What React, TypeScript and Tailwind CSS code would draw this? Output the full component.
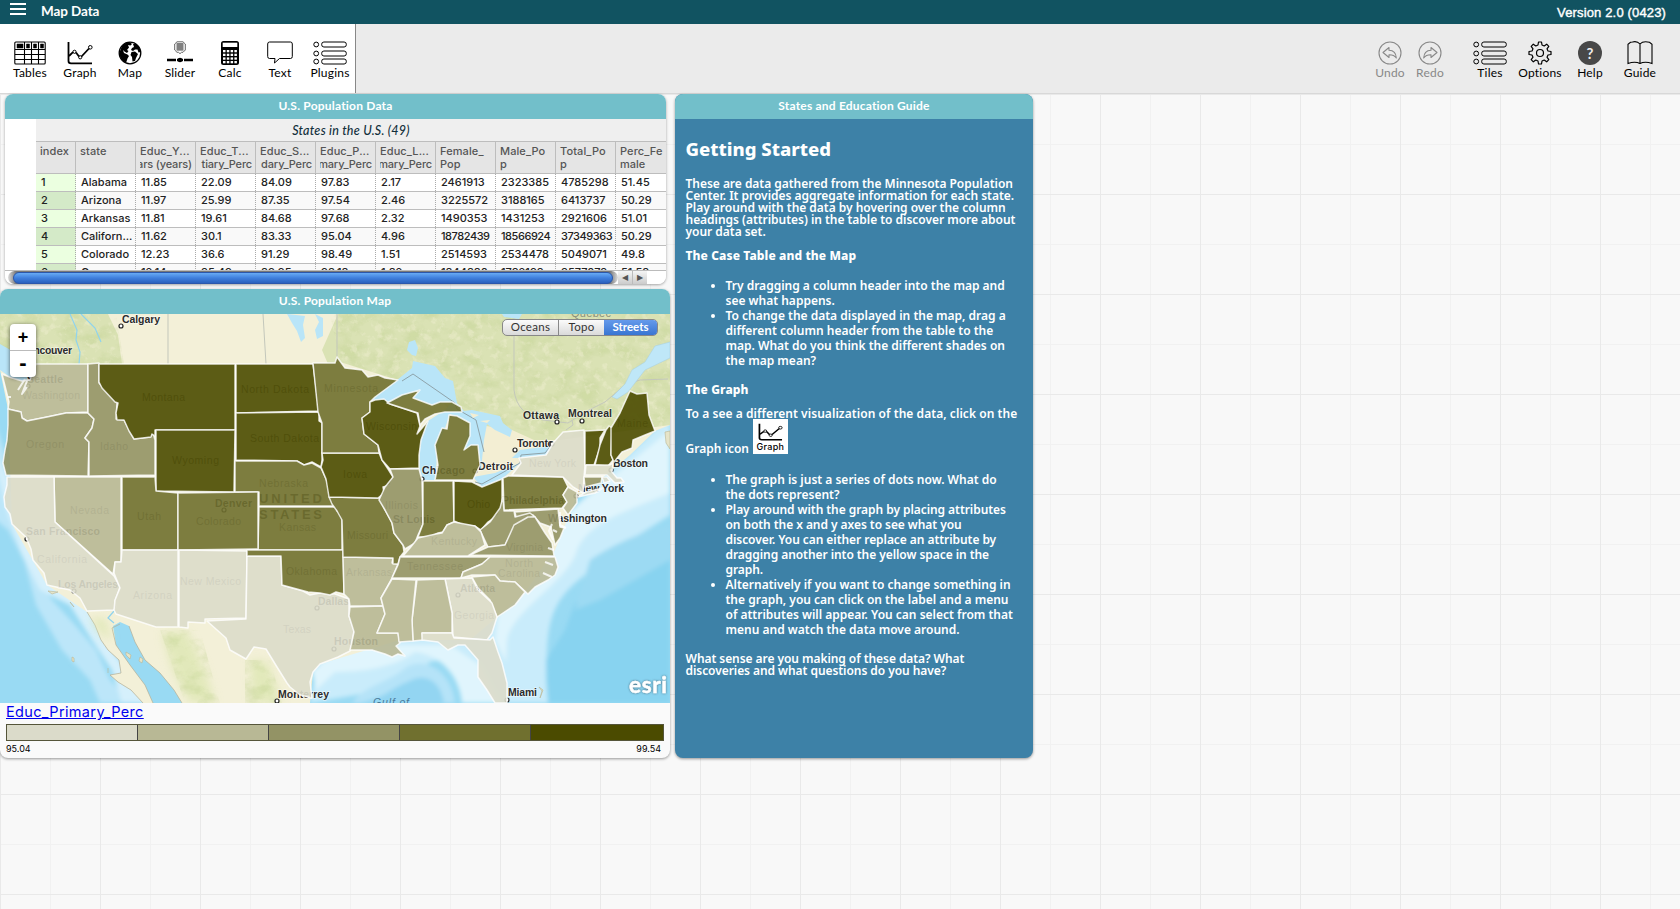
import React from "react";

const SHADES = ["#dbdbca", "#b8b895", "#939365", "#70702f", "#4b4b00"];

const STATES: { c: number; p: string }[] = [
  { c: 1, p: "2,374 12,378 22,381 30,380 36,364 88,364 88,412 66,413 47,417 27,421 22,418 21,412 8,409 9,402 6,390" },
  { c: 2, p: "8,409 21,412 22,418 27,421 47,417 66,413 88,413 94,419 92,428 85,438 89,442 88,476 6,475 3,463 5,450 7,440 8,425" },
  { c: 2, p: "88,364 99,363 99,383 117,403 116,419 124,420 134,439 150,437 153,433 155,440 155,475 89,476 89,442 85,438 92,428 94,419 88,413" },
  { c: 4, p: "99,364 235,364 235,430 155,430 155,436 152,434 151,437 134,439 129,431 124,420 117,420 116,413 118,403 115,402 102,388 99,382" },
  { c: 4, p: "156,430 235,430 234,492 156,491" },
  { c: 4, p: "236,364 313,364 319,411 236,413" },
  { c: 4, p: "236,413 319,412 319,421 322,423 322,460 321,467 312,462 304,465 297,461 236,460" },
  { c: 3, p: "235,461 297,461 304,465 312,463 321,468 326,479 328,484 330,497 336,506 259,506 259,492 235,492" },
  { c: 3, p: "259,507 337,507 337,511 341,514 342,517 342,550 258,550" },
  { c: 1, p: "54,477 121,477 121,562 115,562 113,574 55,522" },
  { c: 0, p: "7,477 54,477 55,522 114,576 120,587 115,601 116,607 114,610 87,611 80,598 70,590 47,585 44,573 33,560 31,549 26,537 12,524 10,514 5,507 4,497 7,485" },
  { c: 3, p: "122,477 155,477 156,491 178,493 178,550 122,550" },
  { c: 3, p: "178,493 258,492 258,549 178,550" },
  { c: 0, p: "122,550 178,550 178,627 156,627 116,614 114,610 115,600 120,588 114,573 115,562 121,562" },
  { c: 0, p: "179,550 247,551 246,618 205,619 205,623 188,622 188,628 179,627" },
  { c: 0, p: "247,556 281,556 282,585 303,591 310,595 320,593 335,594 349,599 349,616 354,630 352,645 350,651 338,657 320,664 313,672 310,682 312,698 300,695 290,687 287,683 277,667 266,649 254,647 246,659 230,650 226,638 207,621 246,619" },
  { c: 3, p: "247,550 343,550 344,594 336,592 330,595 320,593 308,592 282,585 281,556 247,556" },
  { c: 1, p: "343,557 393,558 392,563 398,564 392,578 381,598 383,606 350,606 349,599 344,594" },
  { c: 1, p: "350,607 383,606 385,614 377,633 398,633 400,643 396,646 405,656 398,654 392,657 385,654 372,650 350,650 354,632 349,616" },
  { c: 3, p: "329,497 379,498 385,510 392,523 394,533 403,545 404,552 400,557 398,564 393,564 393,558 343,557 342,520 337,511 332,504" },
  { c: 4, p: "322,453 379,453 382,460 388,469 393,477 390,485 383,487 384,493 378,498 329,497 326,479 321,467 323,460" },
  { c: 3, p: "313,363 335,363 337,357 345,368 362,370 368,377 378,375 385,378 398,380 375,397 370,402 370,412 362,418 364,434 378,445 379,453 322,453 322,423 318,412" },
  { c: 4, p: "370,402 375,400 384,399 390,404 417,413 420,426 417,434 428,421 421,440 419,455 419,468 390,469 382,460 378,445 364,434 362,418 370,412" },
  { c: 3, p: "387,403 402,395 420,390 413,398 432,405 440,402 452,402 461,407 462,412 445,412 435,414 425,419 420,425 418,413" },
  { c: 3, p: "449,415 457,416 470,423 470,436 464,450 471,445 478,445 480,465 473,480 435,480 438,465 435,445 442,428 447,429" },
  { c: 2, p: "390,469 419,469 422,480 423,524 418,535 415,543 405,549 403,545 394,533 392,523 385,510 379,500 385,487 393,477" },
  { c: 3, p: "423,481 453,481 454,522 447,525 443,532 438,533 430,537 418,537 423,524" },
  { c: 4, p: "454,481 472,482 482,487 502,479 502,505 498,515 488,522 481,530 475,526 463,525 454,521" },
  { c: 3, p: "503,478 508,476 563,477 568,487 563,495 567,502 562,508 504,510" },
  { c: 0, p: "512,475 521,463 519,458 546,455 553,443 563,432 584,430 585,465 584,477 583,493 573,487 563,477" },
  { c: 4, p: "585,431 605,430 600,438 600,448 594,465 585,465" },
  { c: 4, p: "606,430 609,426 612,428 611,455 613,460 608,466 595,465 600,445" },
  { c: 4, p: "630,391 637,394 647,393 649,415 655,431 645,435 633,440 632,448 622,452 614,462 611,455 611,428 620,413" },
  { c: 0, p: "586,465 610,465 613,463 612,472 617,478 621,478 624,482 615,483 607,475 585,475" },
  { c: 2, p: "584,477 602,477 601,483 585,487" },
  { c: 0, p: "602,477 607,477 610,481 604,483" },
  { c: 0, p: "578,497 586,492 603,488 595,493" },
  { c: 1, p: "568,487 577,492 577,503 568,515 563,508 567,502 563,495" },
  { c: 2, p: "515,512 558,509 560,527 564,528 560,538 555,545 551,527 540,523 533,515 523,517 516,517" },
  { c: 2, p: "503,497 504,511 514,511 515,517 530,513 535,517 527,518 514,528 505,545 488,547 480,530 490,522 500,508" },
  { c: 2, p: "470,555 488,547 505,545 514,525 528,517 535,517 545,533 552,543 554,556" },
  { c: 1, p: "403,556 410,548 418,538 436,534 442,533 447,525 454,522 475,526 481,532 485,545 468,556" },
  { c: 2, p: "400,557 490,557 482,564 463,572 461,578 392,578 398,565" },
  { c: 1, p: "490,557 555,557 558,567 555,575 548,580 535,587 528,594 515,582 500,581 495,575 472,575 461,578 463,572 482,564" },
  { c: 1, p: "472,577 495,575 500,581 515,582 525,592 515,605 497,617 490,600 478,588" },
  { c: 0, p: "445,579 472,578 478,590 492,603 497,617 492,633 487,640 453,637 452,613" },
  { c: 1, p: "417,580 445,579 452,613 452,633 422,633 423,640 413,641 412,620" },
  { c: 1, p: "392,579 416,580 412,620 413,641 399,642 398,633 377,633 385,614 383,606 381,598" },
  { c: 0, p: "422,633 452,633 454,638 490,640 493,637 498,652 502,663 507,683 507,703 495,703 487,690 478,677 478,660 465,645 458,645 448,650 438,642 422,640" },
];

const CITIES: [string, number, number, number][] = [
  ["Calgary", 122, 323, 38], ["Vancouver", 22, 354, 50], ["Seattle", 27, 383, 36],
  ["Denver", 215, 507, 37], ["San Francisco", 26, 535, 74], ["Los Angeles", 58, 588, 60],
  ["Dallas", 318, 605, 31], ["Houston", 334, 645, 44], ["Monterrey", 278, 698, 51],
  ["Miami", 508, 696, 29], ["Atlanta", 460, 592, 35], ["St Louis", 393, 523, 42],
  ["Chicago", 422, 474, 43], ["Detroit", 478, 470, 35], ["Toronto", 517, 447, 37],
  ["Ottawa", 523, 419, 36], ["Montreal", 568, 417, 44], ["Boston", 613, 467, 35],
  ["New York", 578, 492, 46], ["Washington", 548, 522, 59], ["Philadelphia", 502, 504, 62],
];

const REGIONS: [string, number, number, number][] = [
  ["Washington", 22, 399, 58], ["Oregon", 26, 448, 38], ["Idaho", 100, 450, 28],
  ["Montana", 142, 401, 43], ["North Dakota", 241, 393, 68], ["South Dakota", 250, 442, 69],
  ["Minnesota", 324, 392, 54], ["Wisconsin", 366, 430, 51], ["Iowa", 343, 478, 24],
  ["Wyoming", 172, 464, 47], ["Nebraska", 259, 487, 49], ["Nevada", 70, 514, 39],
  ["Utah", 137, 520, 24], ["Colorado", 196, 525, 45], ["Kansas", 279, 531, 37],
  ["California", 37, 563, 50], ["Arizona", 133, 599, 39], ["New Mexico", 180, 585, 61],
  ["Oklahoma", 286, 575, 51], ["Texas", 283, 633, 28], ["Arkansas", 346, 576, 46],
  ["Missouri", 347, 539, 41], ["Illinois", 385, 509, 33], ["Ohio", 467, 508, 23],
  ["Kentucky", 431, 545, 46], ["Tennessee", 407, 570, 56], ["Virginia", 506, 551, 37],
  ["North", 505, 567, 28], ["Carolina", 498, 577, 42], ["Georgia", 454, 619, 40],
  ["New York", 529, 467, 47], ["Maine", 617, 427, 31],
];

const DOTS = [[121, 326], [515, 450], [557, 422], [582, 421], [507, 700], [277, 701], [27, 539], [74, 591], [224, 510], [317, 608], [458, 595], [422, 479], [475, 471], [552, 444], [611, 470], [576, 496], [334, 649], [28, 386]];

function UsMap() {
  return (
    <svg className="block h-[389px] w-[670px]" viewBox="0 314 670 389" fontFamily="Liberation Sans, sans-serif">
      <defs>
        <filter id="relief" filterUnits="userSpaceOnUse" x="0" y="314" width="670" height="389" colorInterpolationFilters="sRGB">
          <feTurbulence type="fractalNoise" baseFrequency="0.05 0.07" numOctaves="5" seed="7" />
          <feColorMatrix values="0 0 0 0 0.72  0 0 0 0 0.8  0 0 0 0 0.52  3 0 0 0 -1.3" />
          <feComposite in2="SourceGraphic" operator="in" />
        </filter>
        <filter id="clearings" filterUnits="userSpaceOnUse" x="0" y="314" width="670" height="389" colorInterpolationFilters="sRGB">
          <feTurbulence type="fractalNoise" baseFrequency="0.12" numOctaves="4" seed="21" />
          <feColorMatrix values="0 0 0 0 0.955  0 0 0 0 0.945  0 0 0 0 0.84  5 0 0 0 -2.7" />
          <feComposite in2="SourceGraphic" operator="in" />
        </filter>
        <filter id="soft"><feGaussianBlur stdDeviation="5" /></filter>
        <filter id="shore" x="-10%" y="-10%" width="120%" height="120%"><feGaussianBlur stdDeviation="2" /></filter>
        <filter id="logo"><feDropShadow dx="0" dy="0" stdDeviation="1.3" floodColor="#345" floodOpacity="0.8" /></filter>
      </defs>
      <rect y="314" width="670" height="389" fill="#99daf3" />
      <g filter="url(#shore)">
        <path d="M-10 405 L10 470 12 510 27 560 52 600 75 625 96 650 110 680 132 703 100 703 90 680 62 650 36 605 24 560 8 530 -10 515Z" fill="#bce6f9" />
        <path d="M-10 440 L8 515 22 555 40 590 70 605 92 640 112 670 122 703 150 703 105 640 80 590 40 560 8 480Z" fill="#d5f0fc" />
        <path d="M670 415 V515 C640 535 610 550 585 575 C545 605 548 630 546 680 L548 703 H490 C470 680 455 655 430 662 C405 682 398 675 385 690 L310 703 320 655 380 630 440 600 560 520Z" fill="#c9ecfb" />
        <path d="M670 430 V493 C630 510 588 522 577 550 C570 580 512 610 507 640 L506 662 495 640 500 600 560 520Z M450 645 L480 665 500 703 H462 C460 680 445 656 415 652 C395 668 360 672 335 672 L316 690 312 670 350 645Z" fill="#e0f5fd" />
        <path d="M352 703 C365 685 390 682 405 668 C425 655 452 672 455 703Z" fill="#b5e3f8" />
        <path d="M360 703 C385 698 395 686 408 682 C425 672 440 680 444 703Z" fill="#93d5f2" />
        <path d="M575 603 C600 590 640 570 670 555 V703 H548 L546 660 565 630Z" fill="#88d3f0" />
        <path d="M590 560 C620 540 650 530 670 525 V560 L600 600 575 610Z" fill="#9cdaf3" />
      </g>
      <path d="M0 314 H670 V425 L655 431 630 455 612 470 575 500 555 550 525 592 497 617 470 640 400 640 350 655 320 664 313 672 310 703 H182 L174 690 160 673 145 660 135 642 129 626 120 622 113 626 116 645 130 665 145 685 153 703 H143 L131 690 118 682 110 675 121 673 119 660 108 650 101 640 95 625 87 612 47 585 12 524 8 409 0 370Z" fill="#f3f0d8" />
      <path d="M143 703 L131 690 118 682 110 675 121 673 119 660 108 650 101 640 95 625 87 612 M153 703 L145 685 130 665 116 645 112 628 120 624 M182 703 L174 690 160 673 145 660 135 642 129 626" fill="none" stroke="#b3ad93" strokeWidth="0.7" />
      <path d="M0 314 H108 L118 335 122 364 H0Z M338 314 H670 V425 L560 440 480 440 430 390 340 362 328 364 322 350Z" fill="#dae2b4" />
      <path d="M480 425 L512 430 545 445 520 462 480 483 481 440Z" fill="#f3eed3" />
      <path d="M162 632 L188 632 205 670 215 703 190 703 172 668Z M250 660 L268 662 282 703 252 703Z M90 618 L105 618 112 640 101 634Z" fill="#dce6b0" opacity=".75" filter="url(#soft)" />
      <path d="M0 314 H116 L124 364 H0Z M330 314 H670 V425 L560 438 500 425 430 390 340 362Z M160 630 L200 630 220 703 185 703Z M245 660 L270 660 282 703 245 703Z" fill="#fff" opacity=".3" filter="url(#relief)" />
      <path d="M0 314 H112 L120 364 H0Z M330 314 H670 V425 L560 438 500 425 430 390 340 362Z" fill="#fff" opacity=".4" filter="url(#clearings)" />
      <path d="M168 314 V364 M263 314 L266 364 M337 314 V360 M514 314 V390 Q517 415 543 420 L568 423 585 412 605 402 625 385 640 380 668 379 M566 430 L573 425 572 420" fill="none" stroke="#c3c7bb" strokeWidth="1" />
      <path d="M670 342 V358 L645 370 628 392 617 399 612 397 625 384 632 370 645 362 655 346Z" fill="#bfe7f8" stroke="#a7cfe0" strokeWidth=".5" />
      <g fill="#b9e5f8">
        <path d="M287 314 L305 316 303 325 305 338 301 342 297 331 292 323Z M315 314 L323 318 323 336 317 339 315 330 319 322Z M502 314 H522 L519 319 504 317Z M0 344 L14 352 24 364 36 376 22 381 10 377 0 370Z" />
        <path d="M409 342 L415 340 418 348 416 356 412 355 407 350Z M370 400 L397 380 412 368 413 361 435 366 445 378 453 381 457 403 464 411 472 410 500 416 503 423 512 430 510 437 495 430 487 424 484 440 481 470 478 445 464 450 470 423 450 414 445 428 438 445 435 480 423 480 419 468 420 440 428 421 445 410 452 402 432 405 413 398 420 390 390 404Z" />
        <path d="M473 477 L495 473 520 463 502 479 482 487Z M512 458 L520 450 550 446 552 449 545 455 520 458Z" />
      </g>
      <path d="M402 381 L413 374 455 403 457 409 476 420 484 452 M475 482 L482 484 520 463 521 455 545 453 553 443" fill="none" stroke="#8ea3aa" strokeWidth="1" />
      <path d="M470 413 L479 415 473 418Z M480 421 L490 420 487 423Z" fill="#f3eed3" />
      <path d="M70 314 L77 330 76 340 80 352 79 364 M81 314 L95 328 101 342 M114 611 L108 618 114 623" fill="none" stroke="#8fd3ee" strokeWidth="1.2" />
      <path d="M126 652 l5 3 -1 4 -4 -4Z M140 657 l3 2 -1 4 -3 -2Z M48 591 l10 1 -6 2Z M70 602 l4 5Z M108 668 v5 M539 687 l4 3 -3 8 2 -7Z M665 432 l5 -1 v18 l-4 -6Z M72 657 l2 1 v4 l-2 -1Z" fill="#e6e4c8" stroke="#b9b594" strokeWidth=".6" />
      <g fontSize="10.5" fill="#77776c">
        {REGIONS.map(([t, x, y, w]) => (
          <text key={t + y} x={x} y={y} textLength={w}>{t}</text>
        ))}
      </g>
      <g fontSize="13" fontWeight="bold" fill="#36362e">
        <text x="259" y="503" textLength="63">UNITED</text>
        <text x="259" y="519" textLength="63">STATES</text>
      </g>
      <g fontSize="10.5" fontWeight="bold" fill="#2c2c2c" stroke="#fff" strokeWidth="1.6" strokeOpacity=".5" paintOrder="stroke">
        {CITIES.map(([t, x, y, w]) => (
          <text key={t} x={x} y={y} textLength={w}>{t}</text>
        ))}
      </g>
      <text x="571" y="317" fontSize="11" fill="#8b8f7a" textLength="40">Québec</text>
      <text x="373" y="706" fontSize="10.5" fontStyle="italic" fill="#47799a" textLength="36">Gulf of</text>
      <g fill="#fff" stroke="#222" strokeWidth="1.2">
        {DOTS.map(([x, y]) => <circle key={`${x}-${y}`} cx={x} cy={y} r="2" />)}
      </g>
      <g stroke="#fff" strokeOpacity=".8" strokeWidth="1.5" strokeLinejoin="round">
        {STATES.map((s) => (
          <polygon key={s.p} points={s.p} fill={SHADES[s.c]} fillOpacity=".9" />
        ))}
        <path d="M25 379 L18 390 M27 381 L22 394 27 387 M8 397 L11 397 M552 524 L549 531 553 540 M560 512 L560 525 566 528 M553 530 L557 532 M548 548 l6 2 M545 562 l8 3 M543 573 l9 4" fill="none" strokeWidth="2" />
      </g>
      <text x="629" y="693" fontFamily="Lato, sans-serif" fontWeight="bold" fontSize="22.500" fill="#fff" stroke="#fff" strokeWidth=".4" textLength="38" filter="url(#logo)">esri</text>
    </svg>
  );
}

const I = "h-6 fill-none stroke-black";

const TablesIcon = () => (
  <svg className={`${I} w-8`} viewBox="0 0 32 24">
    <rect x=".8" y="1" width="30.4" height="22" rx="1" strokeWidth="1.1" />
    <path d="M1 8.5H31M1 13.5H31M1 18.5H31M10.5 1V23M17.5 1V23M24.5 1V23" strokeWidth="1.1" />
    <path d="M3 3H9V7H3ZM12.5 3H15.5V7H12.5ZM19.5 3H22.5V7H19.5ZM26.5 3H29.5V7H26.5Z" fill="#000" strokeWidth=".5" />
  </svg>
);
const GraphIcon = ({ className = "h-6 w-[26px]" }: { className?: string }) => (
  <svg className={`${className} fill-none stroke-black`} viewBox="0 0 26 24" preserveAspectRatio="none">
    <path d="M1.5 1V20Q1.5 22.3 4 22.3H25" strokeWidth="1.8" />
    <path d="M2 15L6 11.2M9 11.5L12 15.5M14.5 15.5L22 7.5" strokeWidth="1.8" />
    <circle cx="7.5" cy="10.8" r="1.6" /><circle cx="13.2" cy="16.3" r="1.6" /><circle cx="23.3" cy="6.3" r="1.8" />
  </svg>
);
const GlobeIcon = () => (
  <svg className={`${I} w-6`} viewBox="0 0 24 24">
    <circle cx="12" cy="12" r="10.8" strokeWidth="1.3" />
    <path fill="#000" stroke="none" d="M4 5Q7 1.5 12 1.3L14 3 12.5 4.5 10 4 11 6.5 9 9 10.5 10 9 12 6.5 10.5 5 9 6 12 9.5 13.5 11 15 9.5 17.5 8 22Q3 19.500 1.500 14L2 10ZM15 3L18 2.800Q22 6 22.700 11L20.500 11.500 19.500 8.500 17 8.500 15 10 13 9 14 7 16 6ZM13.500 11L17 10.500 20 13 18 17 17 20 14.500 20.500 14 16 12.500 14Z" />
  </svg>
);
const SliderIcon = () => (
  <svg className={`${I} w-[26px]`} viewBox="0 0 26 24">
    <path d="M10 .8H16L18.300 3V9L16 11.300H14.500L13 12.700 11.500 11.300H10L7.700 9V3Z" strokeWidth=".9" stroke="#555" />
    <path d="M9.500 2H16.500V9.700H9.500Z" fill="#808080" stroke="none" />
    <path d="M0 19H9M17 19H26M10 19H16" strokeWidth="2.500" /><circle cx="13" cy="19" r="2.300" fill="#000" stroke="none" />
  </svg>
);
const CalcIcon = () => (
  <svg className={`${I} w-[18px]`} viewBox="0 0 18 24">
    <rect width="18" height="24" rx="2.500" fill="#000" stroke="none" />
    <rect x="1.700" y="1.700" width="14.600" height="4.300" fill="#fff" stroke="none" />
    {[9, 12.7, 16.4, 20].map((y) => [2, 5.8, 9.6, 13.4].map((x) => (
      <rect key={`${x}-${y}`} x={x} y={y} width="2.500" height="2.300" fill="#fff" stroke="none" />
    )))}
  </svg>
);
const TextIcon = () => (
  <svg className={`${I} w-[26px]`} viewBox="0 0 26 24">
    <path d="M2.500 1H23.500Q25.300 1 25.300 3V15.500Q25.300 17.500 23.500 17.500H12.500L7.500 22 8 17.500H2.500Q.7 17.500 .7 15.500V3Q.7 1 2.500 1Z" strokeWidth="1" />
  </svg>
);
const ListIcon = () => (
  <svg className={`${I} w-[34px]`} viewBox="0 0 34 24">
    {[3.5, 12.5, 20.5].map((y) => (
      <g key={y} strokeWidth="1">
        <circle cx="3.200" cy={y} r="2.400" /><rect x="8.700" y={y - 2.5} width="24.600" height="5" rx="2.200" />
      </g>
    ))}
  </svg>
);
const ArrowIcon = ({ flip = false }: { flip?: boolean }) => (
  <svg className="h-6 w-6 fill-none stroke-[#888]" viewBox="0 0 24 24">
    <circle cx="12" cy="12" r="11" strokeWidth="1.100" />
    <path transform={flip ? "translate(24 0) scale(-1 1)" : undefined} d="M5 11.500L11 6.500V9.300Q18 9.500 18.300 17Q16 13.700 11 13.800V16.500Z" strokeWidth="1.100" strokeLinejoin="round" />
  </svg>
);
const GearIcon = () => (
  <svg className={`${I} w-6`} viewBox="0 0 24 24">
    <path d="M10.500 1H13.500L14 4 16.200 5 18.700 3.200 20.800 5.300 19 7.800 20 10 23 10.500V13.500L20 14 19 16.200 20.800 18.700 18.700 20.800 16.200 19 14 20 13.500 23H10.500L10 20 7.800 19 5.300 20.800 3.200 18.700 5 16.200 4 14 1 13.500V10.500L4 10 5 7.800 3.200 5.300 5.300 3.200 7.800 5 10 4Z" strokeWidth="1.200" strokeLinejoin="round" />
    <circle cx="12" cy="12" r="3.500" strokeWidth="1.200" />
  </svg>
);
const HelpIcon = () => (
  <span className="flex h-6 w-6 items-center justify-center rounded-full bg-[#484848] text-[15px] font-bold leading-none text-[#eee]">?</span>
);
const BookIcon = () => (
  <svg className={`${I} w-[26px]`} viewBox="0 0 26 24">
    <path d="M13 3Q10 -.3 5.500 1 L3.500 1.300 1 3.200V22.500Q8 20 13 22.500Q18 20 25 22.500V3.200L22.500 1.300Q16 -.3 13 3ZM13 3V22.500" strokeWidth="1.100" />
  </svg>
);

function Tool({ label, icon, className = "w-[50px]" }: { label: string; icon: React.ReactNode; className?: string }) {
  return (
    <div className={`${className} flex shrink-0 flex-col items-center pt-[17px] text-[12px] font-normal leading-[15px]`}>
      {icon}
      <span className="tracking-[0.2px]">{label}</span>
    </div>
  );
}

function TitleBar({ children }: { children: string }) {
  return <div className="h-[25px] shrink-0 bg-[#72bfca] text-center font-[Lato] text-[12px] font-bold leading-[23px] tracking-[0.2px] text-white">{children}</div>;
}

const HEAD: [string, string, boolean][] = [
  ["index", "", false], ["state", "", false],
  ["Educ_Y...", "ars (years)", true], ["Educ_T...", "tiary_Perc", true], ["Educ_S...", "dary_Perc", true],
  ["Educ_P...", "mary_Perc", true], ["Educ_L...", "mary_Perc", true],
  ["Female_", "Pop", false], ["Male_Po", "p", false], ["Total_Po", "p", false], ["Perc_Fe", "male", false],
];
const ROWS = [
  ["1", "Alabama", "11.85", "22.09", "84.09", "97.83", "2.17", "2461913", "2323385", "4785298", "51.45"],
  ["2", "Arizona", "11.97", "25.99", "87.35", "97.54", "2.46", "3225572", "3188165", "6413737", "50.29"],
  ["3", "Arkansas", "11.81", "19.61", "84.68", "97.68", "2.32", "1490353", "1431253", "2921606", "51.01"],
  ["4", "Californ...", "11.62", "30.1", "83.33", "95.04", "4.96", "18782439", "18566924", "37349363", "50.29"],
  ["5", "Colorado", "12.23", "36.6", "91.29", "98.49", "1.51", "2514593", "2534478", "5049071", "49.8"],
  ["6", "Connec...", "12.14", "35.49", "89.95", "98.18", "1.82", "1844880", "1732193", "3577073", "51.58"],
];
const COLS = "grid grid-cols-[40px_60px_60px_60px_60px_60px_60px_60px_60px_60px_50px]";

function TableTile() {
  return (
    <section className="ml-[5px] flex h-[190px] w-[661px] flex-col overflow-hidden rounded-lg bg-white shadow-[0_1px_3px_rgba(0,0,0,0.35)]">
      <TitleBar>U.S. Population Data</TitleBar>
      <div className="ml-[31px] h-[151px] overflow-hidden font-[Inter]">
        <div className="h-[22px] bg-[#efefef] text-center font-[Lato] text-[12.5px] font-medium italic leading-[23px] tracking-[0.25px] text-[#12303c]">States in the U.S. (49)</div>
        <div className={`${COLS} h-[33px] border-y border-[#bdbdbd] bg-[#e5e5e5] text-[11px] font-medium leading-[12.5px] text-[#555]`}>
          {HEAD.map(([a, b, cut], i) => (
            <div key={i} className={`overflow-hidden whitespace-nowrap border-[#bdbdbd] pl-1 pr-[3px] pt-[3px] ${i < 10 ? "border-r" : ""}`}>
              <div className="tracking-[0.1px]">{a}</div>
              <div className={cut ? "flex justify-end overflow-hidden tracking-[-0.15px]" : ""}>{b}</div>
            </div>
          ))}
        </div>
        {ROWS.map((r, n) => (
          <div key={n} className={`${COLS} h-[18px] border-b border-[#bdbdbd] text-[11px] font-medium leading-[17px] text-[#222] ${n % 2 ? "bg-[#f9f9f9]" : "bg-white"}`}>
            {r.map((v, i) => (
              <div key={i} className={`whitespace-nowrap border-dotted border-[#aaa] pl-[5px] ${i < 10 ? "border-r" : ""} ${v.length === 8 && i > 6 ? "tracking-[-0.45px]" : ""} ${i ? "" : n % 2 ? "bg-[#d4eac8]" : "bg-[#ebffe0]"}`}>{v}</div>
            ))}
          </div>
        ))}
      </div>
      <div className="flex h-[14px] items-center border-t border-[#bbb] bg-white pl-[3px]">
        <div className="flex h-[13px] w-[610px] items-center rounded-full bg-[linear-gradient(to_right,#ddd,#777_8px,#777_602px,#ddd)] px-[5px]">
          <div className="h-3 w-full rounded-full border border-[#2b57ab] bg-linear-to-b from-[#68abf5] via-[#3f7fdd] to-[#2a61bd]" />
        </div>
        <div className="flex h-[13px] w-[29px] bg-linear-to-b from-[#f5f5f5] to-[#ccc] text-[8px] leading-[13px] text-[#555]">
          <span className="w-[15px] border-r border-[#bbb] text-center">◀</span>
          <span className="w-[14px] text-center">▶</span>
        </div>
      </div>
    </section>
  );
}

function MapTile() {
  return (
    <section className="flex h-[469px] w-[670px] flex-col overflow-hidden rounded-lg bg-[#fafafa] shadow-[0_1px_3px_rgba(0,0,0,0.4)]">
      <TitleBar>U.S. Population Map</TitleBar>
      <div className="relative h-[389px] shrink-0">
        <UsMap />
        <div className="absolute left-[10px] top-[10px] flex h-[53px] w-[26px] flex-col rounded bg-white text-center font-['Liberation_Sans'] text-[18px] font-bold leading-[27px] shadow-[0_1px_4px_rgba(0,0,0,0.6)]">
          <span className="h-[27px] border-b border-[#bbb]">+</span>
          <span className="text-[22px] leading-[23px]">-</span>
        </div>
        <div className="absolute left-[502px] top-[5px] flex h-[17px] overflow-hidden rounded-[5px] border border-[#888] bg-linear-to-b from-[#fbfbfb] to-[#dadada] text-center font-[Lato] text-[11.5px] leading-[14px] tracking-[0.3px] text-[#333]">
          <span className="w-[56px] border-r border-[#888]">Oceans</span>
          <span className="w-[45px]">Topo</span>
          <span className="w-[53px] bg-linear-to-b from-[#659aeb] to-[#3875d2] font-bold tracking-normal text-white">Streets</span>
        </div>
      </div>
      <div className="px-[6px] font-[Inter]">
        <div className="h-[21px] text-[14.5px] leading-[17px] tracking-[0.35px] text-[#0000ee]"><span className="underline">Educ_Primary_Perc</span></div>
        <div className="flex h-[17px] w-[658px] border border-[#55553a]">
          <div className="w-[131px] border-r border-[#444] bg-[#dbdbca]" />
          <div className="w-[131px] border-r border-[#444] bg-[#b8b895]" />
          <div className="w-[131px] border-r border-[#444] bg-[#939365]" />
          <div className="w-[131px] border-r border-[#444] bg-[#70702f]" />
          <div className="flex-1 bg-[#4b4b00]" />
        </div>
        <div className="flex w-[655px] justify-between pt-[2px] text-[9px] leading-3"><span>95.04</span><span>99.54</span></div>
      </div>
    </section>
  );
}

const Lines = ({ items }: { items: string[] }) => (
  <>{items.map((t) => <span key={t} className="block whitespace-nowrap">{t}</span>)}</>
);

function GuideTile() {
  return (
    <section className="flex h-[664px] w-[358px] flex-col overflow-hidden rounded-lg bg-[#3d81a7] shadow-[0_1px_3px_rgba(0,0,0,0.4)]">
      <TitleBar>States and Education Guide</TitleBar>
      <div className="px-[10.5px] font-['Noto_Sans'] text-[12px] font-semibold leading-3 text-white">
        <h1 className="mt-[18px] text-[18.5px] font-extrabold leading-6">Getting Started</h1>
        <p className="mt-[17px] tracking-[-0.03px]"><Lines items={["These are data gathered from the Minnesota Population", "Center. It provides aggregate information for each state.", "Play around with the data by hovering over the column", "headings (attributes) in the table to discover more about", "your data set."]} /></p>
        <p className="mt-3 font-extrabold tracking-[0.1px]">The Case Table and the Map</p>
        <ul className="mt-4 list-disc pl-10 leading-[15px]">
          <li><Lines items={["Try dragging a column header into the map and", "see what happens."]} /></li>
          <li><Lines items={["To change the data displayed in the map, drag a", "different column header from the table to the", "map. What do you think the different shades on", "the map mean?"]} /></li>
        </ul>
        <p className="mt-4 font-extrabold tracking-[0.1px]">The Graph</p>
        <p className="mt-3 whitespace-nowrap tracking-[0.06px]">To a see a different visualization of the data, click on the</p>
        <div className="-mt-px flex h-[35px] items-end">
          <span className="relative top-px mr-1">Graph icon</span>
          <span className="flex h-[35px] w-[35px] flex-col items-center bg-white pt-1 font-[Inter] text-[9px] font-medium leading-[11px] tracking-[0.3px] text-black">
            <GraphIcon className="h-[18px] w-[25px]" />Graph
          </span>
        </div>
        <ul className="mt-[18px] list-disc pl-10 leading-[15px]">
          <li><Lines items={["The graph is just a series of dots now. What do", "the dots represent?"]} /></li>
          <li className="tracking-[-0.06px]"><Lines items={["Play around with the graph by placing attributes", "on both the x and y axes to see what you", "discover. You can either replace an attribute by", "dragging another into the yellow space in the", "graph."]} /></li>
          <li><Lines items={["Alternatively if you want to change something in", "the graph, you can click on the label and a menu", "of attributes will appear. You can select from that", "menu and watch the data move around."]} /></li>
        </ul>
        <p className="mt-4 tracking-[-0.06px]"><Lines items={["What sense are you making of these data? What", "discoveries and what questions do you have?"]} /></p>
      </div>
    </section>
  );
}

export default function App() {
  return (
    <div className="flex h-[909px] w-[1680px] flex-col overflow-hidden bg-[#f8f8f8] font-[Lato] text-black">
      <header className="flex h-6 shrink-0 items-center justify-between bg-[#115361] pl-[10px] pr-[14px] text-white">
        <div className="flex items-center">
          <svg className="mb-1.5 h-3 w-4" viewBox="0 0 16 12"><path d="M0 1H16M0 6H16M0 11H16" stroke="#fff" strokeWidth="2" /></svg>
          <span className="ml-[15px] pb-[3px] text-[13.5px] font-bold leading-5 tracking-[-0.1px]">Map Data</span>
        </div>
        <span className="pt-px font-['Liberation_Sans'] text-[13px] leading-5 tracking-[0.15px] [-webkit-text-stroke:0.4px_white]">Version 2.0 (0423)</span>
      </header>
      <nav className="flex h-[70px] shrink-0 justify-between border-b border-[#d8d8d8] bg-[#ebebeb]">
        <div className="flex w-[356px] border-r border-[#888] bg-white pl-[5px]">
          <Tool label="Tables" icon={<TablesIcon />} />
          <Tool label="Graph" icon={<GraphIcon />} />
          <Tool label="Map" icon={<GlobeIcon />} />
          <Tool label="Slider" icon={<SliderIcon />} />
          <Tool label="Calc" icon={<CalcIcon />} />
          <Tool label="Text" icon={<TextIcon />} />
          <Tool label="Plugins" icon={<ListIcon />} />
        </div>
        <div className="flex pr-[15px]">
          <div className="mr-[15px] flex text-[#888]">
            <Tool label="Undo" icon={<ArrowIcon />} className="w-10" />
            <Tool label="Redo" icon={<ArrowIcon flip />} className="w-10" />
          </div>
          <Tool label="Tiles" icon={<ListIcon />} />
          <Tool label="Options" icon={<GearIcon />} />
          <Tool label="Help" icon={<HelpIcon />} />
          <Tool label="Guide" icon={<BookIcon />} />
        </div>
      </nav>
      <main className="flex flex-1 items-start gap-[5px] bg-[linear-gradient(to_right,#e9e9e9_1px,transparent_1px),linear-gradient(to_bottom,#e9e9e9_1px,transparent_1px),linear-gradient(to_right,#f1f1f1_1px,transparent_1px),linear-gradient(to_bottom,#f1f1f1_1px,transparent_1px)] bg-[length:100px_100px,100px_100px,50px_50px,50px_50px]">
        <div className="flex flex-col gap-[5px]">
          <TableTile />
          <MapTile />
        </div>
        <GuideTile />
      </main>
    </div>
  );
}
